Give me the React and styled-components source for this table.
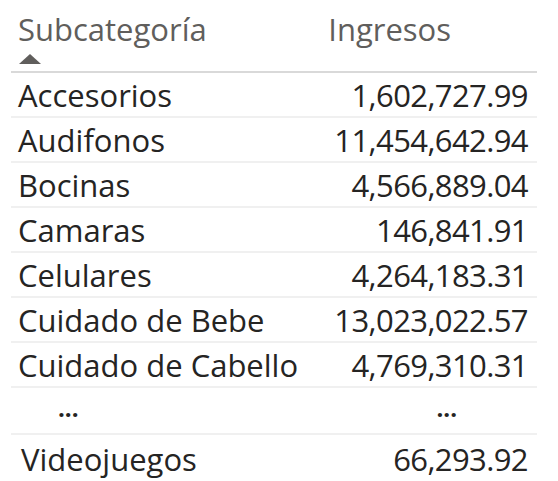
import React from 'react';
import styled, { createGlobalStyle } from 'styled-components';

const Global = createGlobalStyle`
  html, body {
    margin: 0;
    padding: 0;
    background: #ffffff;
  }
  body {
    font-family: "Open Sans", "Noto Sans", sans-serif;
  }
`;

const Table = styled.div`
  width: 526px;
  margin-left: 11px;
  padding-top: 7px;
`;

const HeaderRow = styled.div`
  display: grid;
  grid-template-columns: 1fr auto;
  height: 64px;
  border-bottom: 2px solid #d9d9d9;
  color: #605e5c;
  font-size: 31px;
`;

const HeaderCell = styled.div`
  display: flex;
  flex-direction: column;
  padding: 0 ${p => (p.$right ? '86px' : '0')} 0 7px;
  line-height: 44px;
`;

const SortArrow = styled.span`
  display: block;
  width: 0;
  height: 0;
  margin-left: 1px;
  border-left: 11px solid transparent;
  border-right: 11px solid transparent;
  border-bottom: 10px solid #605e5c;
  margin-top: 3px;
`;

const Row = styled.div`
  display: grid;
  grid-template-columns: 1fr auto;
  align-items: center;
  height: ${p => p.$h || 45}px;
  border-bottom: ${p => (p.$last ? 'none' : '2px solid #f0f0f0')};
  box-sizing: border-box;
  color: #252423;
  font-size: 31px;
  line-height: 40px;
`;

const Cell = styled.div`
  padding: 0 ${p => (p.$right ? '9px' : '0')} 0 ${p => p.$indent || 7}px;
  text-align: ${p => (p.$right ? 'right' : 'left')};
  letter-spacing: ${p => (p.$right ? '-0.6px' : '0')};
  white-space: nowrap;
`;

const Ellipsis = styled.span`
  display: inline-block;
  font-size: 24px;
  font-weight: 700;
  letter-spacing: 0;
  transform: translateY(-4px);
`;

const rows = [
  ['Accesorios', '1,602,727.99'],
  ['Audifonos', '11,454,642.94'],
  ['Bocinas', '4,566,889.04'],
  ['Camaras', '146,841.91'],
  ['Celulares', '4,264,183.31'],
  ['Cuidado de Bebe', '13,023,022.57'],
  ['Cuidado de Cabello', '4,769,310.31'],
];

export default function App() {
  return (
    <>
      <Global />
      <Table>
        <HeaderRow>
          <HeaderCell>
            Subcategoría
            <SortArrow />
          </HeaderCell>
          <HeaderCell $right>Ingresos</HeaderCell>
        </HeaderRow>
        {rows.map(([name, value]) => (
          <Row key={name}>
            <Cell>{name}</Cell>
            <Cell $right>{value}</Cell>
          </Row>
        ))}
        <Row $h={47}>
          <Cell $indent={47}><Ellipsis>...</Ellipsis></Cell>
          <Cell $right style={{ paddingRight: 80 }}><Ellipsis>...</Ellipsis></Cell>
        </Row>
        <Row $h={48} $last>
          <Cell $indent={10}>Videojuegos</Cell>
          <Cell $right>66,293.92</Cell>
        </Row>
      </Table>
    </>
  );
}
